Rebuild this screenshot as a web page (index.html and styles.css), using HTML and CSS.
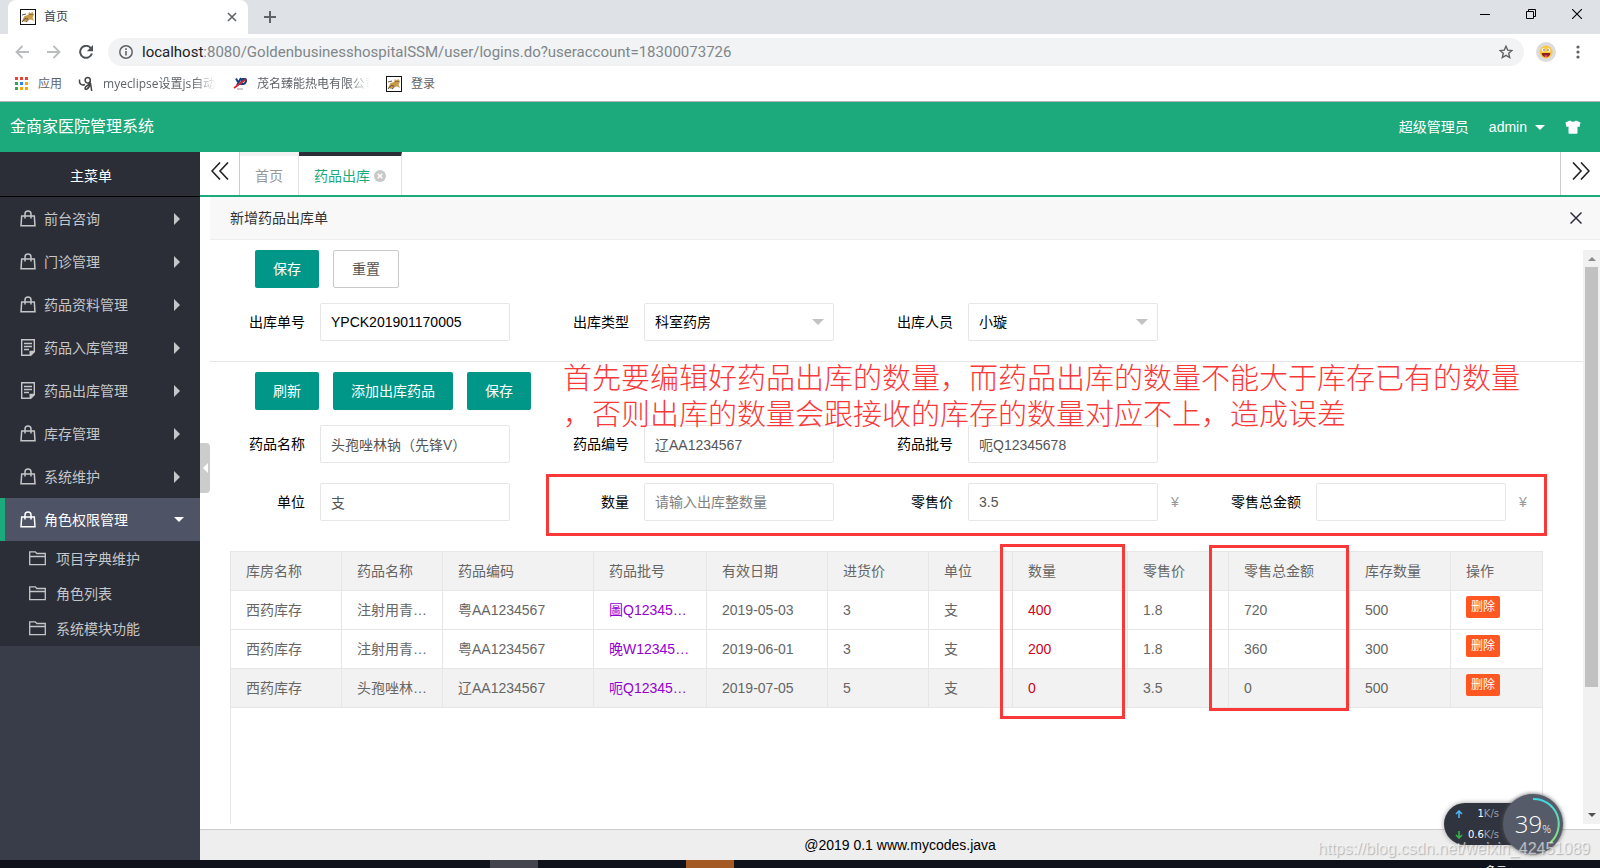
FILE: index.html
```html
<!DOCTYPE html>
<html lang="zh-CN">
<head>
<meta charset="utf-8">
<title>首页</title>
<link rel="stylesheet" href="styles.css">
</head>
<body>
<svg class="defs" width="0" height="0" aria-hidden="true">
  <symbol id="bag" viewBox="0 0 16 17"><path d="M1.700 6h12.600l.7 9.800H1zM5 8.500V4a3 3 0 0 1 6 0v4.500" fill="none" stroke="currentColor" stroke-width="1.500"/></symbol>
  <symbol id="note" viewBox="0 0 16 17"><path d="M9.800 16.200H1.700V.8h12.600v11.500M4 4.500h8M4 7.500h8M4 10.500h5" fill="none" stroke="currentColor" stroke-width="1.400"/><path d="M15 11.800v1.200l-4 4H9.500v-5.200z" fill="currentColor"/></symbol>
  <symbol id="folder" viewBox="0 0 17 15"><path d="M.7 13.600V.8h5.600l1.500 1.700h8.500v11.100zM.7 5.500h15.600" fill="none" stroke="currentColor" stroke-width="1.300"/></symbol>
  <symbol id="cat" viewBox="0 0 16 16"><rect x=".5" y=".5" width="15" height="15" fill="#fff" stroke="#111"/><path d="M2 12l2.500-5L8 6l1-3 1.500 1.300L12.500 3l1.500 2.500-1.500 3L14 12l-3-1.500L8 11l-2.500 2z" fill="#c99a49"/><path d="M2 6l4-1M2 13l3-3.500 3 .5M9.500 5l1 1M12 5v1M6 13l2.500-2" stroke="#555" fill="none"/></symbol>
</svg>

<header class="browser">
  <div class="tabstrip">
    <div class="tab">
      <svg width="16" height="16"><use href="#cat"/></svg>
      <span class="tab-title">首页</span>
      <button class="plain" aria-label="关闭标签页"><svg width="10" height="10" viewBox="0 0 10 10"><path d="M1 1l8 8M9 1L1 9" stroke="#5f6368" stroke-width="1.600"/></svg></button>
    </div>
    <button class="plain newtab" aria-label="新标签页"><svg width="12" height="12" viewBox="0 0 12 12"><path d="M6 0v12M0 6h12" stroke="#5f6368" stroke-width="2"/></svg></button>
    <div class="winctl">
      <button class="plain" aria-label="最小化"><svg width="10" height="10" viewBox="0 0 10 10"><path d="M0 5.500h10" stroke="#000"/></svg></button>
      <button class="plain" aria-label="还原"><svg width="10" height="10" viewBox="0 0 10 10"><path d="M.5 2.500h7v7h-7zM2.500 2.500v-2h7v7h-2" fill="none" stroke="#000"/></svg></button>
      <button class="plain" aria-label="关闭"><svg width="10" height="10" viewBox="0 0 10 10"><path d="M0 0l10 10M10 0L0 10" stroke="#000" stroke-width="1.100"/></svg></button>
    </div>
  </div>
  <div class="toolbar">
    <button class="plain" aria-label="后退"><svg width="14" height="14" viewBox="0 0 14 14"><path d="M14 7H1.500M7.500 1l-6 6 6 6" fill="none" stroke="#babcbe" stroke-width="1.800"/></svg></button>
    <button class="plain" aria-label="前进"><svg width="14" height="14" viewBox="0 0 14 14"><path d="M0 7h12.500M6.500 1l6 6-6 6" fill="none" stroke="#babcbe" stroke-width="1.800"/></svg></button>
    <button class="plain" aria-label="重新加载"><svg width="14" height="14" viewBox="0 0 14 14"><path d="M12 3.300A6 6 0 1 0 12.900 8.500" fill="none" stroke="#4e5257" stroke-width="2"/><path d="M14 0v6.200H7.800z" fill="#4e5257"/></svg></button>
    <div class="omnibox">
      <svg width="14" height="14" viewBox="0 0 14 14"><circle cx="7" cy="7" r="6.200" fill="none" stroke="#5f6368" stroke-width="1.500"/><path d="M7 6v4.500M7 3.300v1.700" stroke="#5f6368" stroke-width="1.600"/></svg>
      <span class="url"><b>localhost</b>:8080/GoldenbusinesshospitalSSM/user/logins.do?useraccount=18300073726</span>
      <svg width="14" height="14" viewBox="0 0 14 14"><path d="M7 1.200l1.700 3.900 4.200.4-3.200 2.800 1 4.200L7 10.300l-3.700 2.200 1-4.200L1.100 5.500l4.200-.4z" fill="none" stroke="#5f6368" stroke-width="1.400"/></svg>
    </div>
    <svg width="20" height="20" viewBox="0 0 20 20"><circle cx="10" cy="10" r="10" fill="#dadce0"/><circle cx="10" cy="10" r="6.500" fill="#fbc844"/><circle cx="7.500" cy="8" r="1.700" fill="#fff"/><circle cx="12.500" cy="8" r="1.700" fill="#fff"/><circle cx="8" cy="8" r=".7" fill="#222"/><circle cx="12" cy="8" r=".7" fill="#222"/><path d="M5.700 11h8.600a4.300 4.300 0 0 1-8.600 0z" fill="#8c1f1f"/><path d="M8 14a2.500 2 0 0 1 4 0l-2 1.200z" fill="#f0637a"/></svg>
    <button class="plain" aria-label="菜单"><svg width="4" height="14" viewBox="0 0 4 14"><g fill="#5f6368"><circle cx="2" cy="2" r="1.600"/><circle cx="2" cy="7" r="1.600"/><circle cx="2" cy="12" r="1.600"/></g></svg></button>
  </div>
  <nav class="bookmarks">
    <a href="#"><svg width="14" height="14" viewBox="0 0 14 14"><path d="M0 0h3v3H0zM5 0h3v3H5zM10 0h3v3h-3z" fill="#ea4335"/><path d="M0 5h3v3H0zM0 10h3v3H0z" fill="#34a853"/><path d="M5 5h3v3H5z" fill="#2d86f0"/><path d="M10 5h3v3h-3zM5 10h3v3H5zM10 10h3v3h-3z" fill="#f4a90a"/></svg><span>应用</span></a>
    <a href="#"><svg width="16" height="16" viewBox="0 0 16 16"><path d="M1.500 3.500c-.5 4 1.500 6.500 5.500 5M12.300 4.200a2.600 2.800 0 1 1-5.200 0 2.600 2.800 0 0 1 5.200 0c.3 3-1.300 4.500-3.600 5.800-2.400 1.400-2.200 4.200.3 3 1.800-1 3-3.500 3.500-6l1.200 8" fill="none" stroke="#444" stroke-width="1.500"/></svg><span class="fade">myeclipse设置js自动</span></a>
    <a href="#"><svg width="16" height="16" viewBox="0 0 16 16"><path d="M4 2.500l2 3.500M9 2L5 9.500M9 8l1.500-5H13c2 0 1 5-2 5z" fill="none" stroke="#17407e" stroke-width="2"/><path d="M2 12L13.500 3.500" stroke="#dc2430" stroke-width="1.700"/><path d="M5 13h6" stroke="#999"/></svg><span class="fade">茂名臻能热电有限公司</span></a>
    <a href="#"><svg width="16" height="16"><use href="#cat"/></svg><span>登录</span></a>
  </nav>
</header>

<div class="topbar">
  <h1>金商家医院管理系统</h1>
  <span>超级管理员</span>
  <button class="plain user">admin<i class="tri down"></i></button>
  <button class="plain" aria-label="换肤"><svg width="16" height="14" viewBox="0 0 16 14"><path d="M5 .5q3 2.500 6 0l4.500 2L14.500 7l-2-.5V13q0 .7-.7.7H4.200q-.7 0-.7-.7V6.500l-2 .5L.5 2.500z" fill="#fff"/></svg></button>
</div>

<div class="app">
  <aside class="side">
    <h2>主菜单</h2>
    <nav>
      <a class="item" href="#"><svg><use href="#bag"/></svg>前台咨询<i class="tri right"></i></a>
      <a class="item" href="#"><svg><use href="#bag"/></svg>门诊管理<i class="tri right"></i></a>
      <a class="item" href="#"><svg><use href="#bag"/></svg>药品资料管理<i class="tri right"></i></a>
      <a class="item" href="#"><svg><use href="#note"/></svg>药品入库管理<i class="tri right"></i></a>
      <a class="item" href="#"><svg><use href="#note"/></svg>药品出库管理<i class="tri right"></i></a>
      <a class="item" href="#"><svg><use href="#bag"/></svg>库存管理<i class="tri right"></i></a>
      <a class="item" href="#"><svg><use href="#bag"/></svg>系统维护<i class="tri right"></i></a>
      <a class="item active" href="#"><svg><use href="#bag"/></svg>角色权限管理<i class="tri down"></i></a>
      <a class="sub" href="#"><svg><use href="#folder"/></svg>项目字典维护</a>
      <a class="sub" href="#"><svg><use href="#folder"/></svg>角色列表</a>
      <a class="sub" href="#"><svg><use href="#folder"/></svg>系统模块功能</a>
    </nav>
  </aside>

  <main class="main">
    <button class="plain collapse" aria-label="收起菜单"><i class="tri left"></i></button>
    <div class="pagetabs">
      <button class="plain scroll" aria-label="向左"><svg width="18" height="18" viewBox="0 0 18 18"><path d="M9 .5L1 9l8 8.500M17 .5L9 9l8 8.500" fill="none" stroke="#222" stroke-width="1.600"/></svg></button>
      <button class="plain ptab">首页</button>
      <button class="plain ptab current">药品出库<svg width="12" height="12" viewBox="0 0 13 13"><circle cx="6.500" cy="6.500" r="6.500" fill="#c8c8c8"/><path d="M4 4l5 5M9 4L4 9" stroke="#fff" stroke-width="1.600"/></svg></button>
      <button class="plain scroll end" aria-label="向右"><svg width="18" height="18" viewBox="0 0 18 18"><path d="M1 .5L9 9l-8 8.500M9 .5L17 9l-8 8.500" fill="none" stroke="#222" stroke-width="1.600"/></svg></button>
    </div>

    <section class="panel">
      <header class="panel-head">
        <h3>新增药品出库单</h3>
        <button class="plain" aria-label="关闭"><svg width="12" height="12" viewBox="0 0 12 12"><path d="M.5.5l11 11M11.500.5l-11 11" stroke="#2e2d3c" stroke-width="1.500"/></svg></button>
      </header>
      <div class="frame">
        <div class="content">
          <form>
            <div class="buttons">
              <button type="button" class="btn">保存</button>
              <button type="reset" class="btn ghost">重置</button>
            </div>
            <div class="fields">
              <div class="field"><label for="no">出库单号</label><input id="no" class="strong" value="YPCK201901170005"></div>
              <div class="field"><label for="type">出库类型</label><div class="select"><select id="type"><option>科室药房</option></select></div></div>
              <div class="field"><label for="staff">出库人员</label><div class="select"><select id="staff"><option>小璇</option></select></div></div>
            </div>
          </form>
          <form class="detail">
            <div class="buttons">
              <button type="button" class="btn">刷新</button>
              <button type="button" class="btn">添加出库药品</button>
              <button type="button" class="btn">保存</button>
            </div>
            <div class="fields">
              <div class="field"><label for="name">药品名称</label><input id="name" value="头孢唑林钠（先锋V）"></div>
              <div class="field"><label for="code">药品编号</label><input id="code" value="辽AA1234567"></div>
              <div class="field"><label for="batch">药品批号</label><input id="batch" value="呃Q12345678"></div>
            </div>
            <div class="fields last">
              <div class="field"><label for="unit">单位</label><input id="unit" value="支"></div>
              <div class="field"><label for="qty">数量</label><input id="qty" placeholder="请输入出库整数量"></div>
              <div class="field"><label for="price">零售价</label><input id="price" value="3.5"><span class="yen">¥</span></div>
              <div class="field"><label for="total">零售总金额</label><input id="total"><span class="yen">¥</span></div>
              <div class="mark mark-form"></div>
            </div>
            <p class="remark">首先要编辑好药品出库的数量，而药品出库的数量不能大于库存已有的数量<br>，否则出库的数量会跟接收的库存的数量对应不上，造成误差</p>
          </form>
          <div class="grid">
            <table>
              <colgroup><col class="w111"><col class="w101"><col class="w151"><col class="w113"><col class="w121"><col class="w101"><col class="w84"><col class="w115"><col class="w101"><col class="w121"><col class="w101"><col class="w91"></colgroup>
              <thead><tr><th>库房名称</th><th>药品名称</th><th>药品编码</th><th>药品批号</th><th>有效日期</th><th>进货价</th><th>单位</th><th>数量</th><th>零售价</th><th>零售总金额</th><th>库存数量</th><th>操作</th></tr></thead>
              <tbody>
                <tr><td>西药库存</td><td>注射用青霉素钠</td><td>粤AA1234567</td><td class="violet">圖Q12345678</td><td>2019-05-03</td><td>3</td><td>支</td><td class="red">400</td><td>1.8</td><td>720</td><td>500</td><td><button class="del">删除</button></td></tr>
                <tr><td>西药库存</td><td>注射用青霉素钠</td><td>粤AA1234567</td><td class="violet">晚W12345678</td><td>2019-06-01</td><td>3</td><td>支</td><td class="red">200</td><td>1.8</td><td>360</td><td>300</td><td><button class="del">删除</button></td></tr>
                <tr class="hover"><td>西药库存</td><td>头孢唑林钠（先锋V）</td><td>辽AA1234567</td><td class="violet">呃Q12345678</td><td>2019-07-05</td><td>5</td><td>支</td><td class="red">0</td><td>3.5</td><td>0</td><td>500</td><td><button class="del">删除</button></td></tr>
              </tbody>
            </table>
            <div class="mark mark-qty"></div>
            <div class="mark mark-total"></div>
          </div>
        </div>
        <div class="scrollbar"><i class="tri up"></i><div class="thumb"></div><i class="tri down"></i></div>
      </div>
    </section>
    <footer>@2019 0.1 www.mycodes.java</footer>
  </main>
</div>

<div class="taskbar"><i class="task"></i><i class="task orange"></i><span class="clock">多云</span></div>

<div class="speed">
  <div class="rates">
    <div><svg width="8" height="8" viewBox="0 0 8 8"><path d="M4 8V1M1 4l3-3 3 3" fill="none" stroke="#4bb4f5" stroke-width="1.600"/></svg><b>1</b>K/s</div>
    <div><svg width="8" height="8" viewBox="0 0 8 8"><path d="M4 0v7M1 4l3 3 3-3" fill="none" stroke="#35b34a" stroke-width="1.600"/></svg><b>0.6</b>K/s</div>
  </div>
  <div class="dial">
    <svg width="60" height="60" viewBox="0 0 60 60"><defs><linearGradient id="arc" x2="0" y2="1"><stop stop-color="#3fd6e0"/><stop offset="1" stop-color="#8fe07a"/></linearGradient></defs><path d="M30 5a25 25 0 0 1 17 44" fill="none" stroke="url(#arc)" stroke-width="2"/></svg>
    <span>39<small>%</small></span>
  </div>
</div>
<div class="watermark">https://blog.csdn.net/weixin_42451089</div>
</body>
</html>
```
FILE: styles.css
```css
* { box-sizing: border-box; }
body {
  margin: 0;
  height: 100vh;
  display: flex;
  flex-direction: column;
  overflow: hidden;
  background: #fff;
  color: #000;
  font: 14px/20px "Liberation Sans", "Noto Sans CJK SC", sans-serif;
}
h1, h2, h3, p { margin: 0; font-weight: 400; }
a { color: inherit; text-decoration: none; }
button, input, select { font: inherit; color: inherit; }
button { cursor: pointer; }
svg { flex: none; display: block; }
.defs { position: absolute; }
.plain {
  display: flex;
  align-items: center;
  justify-content: center;
  padding: 0;
  border: 0;
  background: none;
}

/* triangles */
.tri { flex: none; width: 0; height: 0; border: 5px solid transparent; }
.tri.right { border-width: 6px 0 6px 6px; border-left-color: #c5c6c9; }
.tri.left { border-width: 5px 5px 5px 0; border-right-color: #fff; }
.tri.down { border-width: 5px 5px 0; border-top-color: #fff; }
.tri.up { border-width: 0 4px 4px; border-bottom-color: #8c8c8c; }

/* browser chrome */
.browser { flex: none; border-bottom: 1px solid #b6b4b6; font-family: "Open Sans", "Noto Sans CJK SC", sans-serif; }
.tabstrip { display: flex; height: 34px; padding-left: 8px; background: #dee1e6; }
.tab {
  display: flex;
  align-items: center;
  width: 240px;
  padding: 0 11px 0 12px;
  gap: 8px;
  border-radius: 8px 8px 0 0;
  background: #fff;
  color: #3c4043;
  font-size: 12px;
}
.tab-title { flex: 1; }
.newtab { width: 44px; }
.winctl { display: flex; align-items: center; gap: 36px; margin-left: auto; padding: 0 18px 6px 0; }
.toolbar { display: flex; align-items: center; gap: 18px; height: 36px; padding: 0 20px 0 15px; }
.omnibox {
  flex: 1;
  display: flex;
  align-items: center;
  gap: 9px;
  height: 28px;
  margin: 0 -6px 0 -3px;
  padding: 0 11px;
  border-radius: 14px;
  background: #f1f3f4;
}
.toolbar > svg { margin-right: 2px; }
.url { flex: 1; color: #80868b; font-family: Roboto, sans-serif; font-size: 15px; white-space: nowrap; }
.url b { color: #202124; font-weight: 400; }
.bookmarks { display: flex; align-items: center; gap: 16px; height: 31px; padding: 0 15px 3px; color: #5f6368; font-size: 12px; }
.bookmarks a { display: flex; align-items: center; gap: 9px; }
.fade {
  width: 113px;
  overflow: hidden;
  white-space: nowrap;
  mask-image: linear-gradient(to right, #000 80%, transparent);
}

/* application header */
.topbar {
  flex: none;
  display: flex;
  align-items: center;
  gap: 20px;
  height: 50px;
  padding: 0 19px 0 10px;
  background: #1ca97b;
  color: #fff;
}
.topbar h1 { flex: 1; font-size: 16px; }
.user { gap: 8px; }

.app { flex: 1; display: flex; min-height: 0; }

/* sidebar */
.side { flex: none; width: 200px; background: #393d49; color: #c5c6c9; }
.side h2 {
  height: 45px;
  padding-right: 18px;
  border-bottom: 1px solid #000;
  background: #2b2e37;
  color: #fff;
  font-size: 14px;
  line-height: 48px;
  text-align: center;
}
.side nav { background: #2b2e37; }
.item { display: flex; align-items: center; height: 43px; padding: 0 20px; }
.item svg { width: 16px; height: 17px; margin-right: 8px; }
.item .tri { margin-left: auto; }
.item.active { padding: 0 16px 0 15px; border-left: 5px solid #1ca97b; background: #4e5465; color: #fff; }
.sub { display: flex; align-items: center; height: 35px; padding-left: 29px; }
.sub svg { width: 17px; height: 15px; margin-right: 10px; }

/* main area */
.main { position: relative; flex: 1; display: flex; flex-direction: column; min-width: 0; }
.collapse {
  position: absolute;
  left: 0;
  top: 291px;
  width: 10px;
  height: 50px;
  border-radius: 0 4px 4px 0;
  background: #ccc;
}
.pagetabs { flex: none; display: flex; height: 45px; border-bottom: 2px solid #1ca97b; }
.scroll { width: 40px; padding-bottom: 5px; border-right: 1px solid #ccc; }
.scroll.end { margin-left: auto; border: 0; border-left: 1px solid #ccc; }
.ptab { gap: 4px; padding: 0 15px; border-top: 4px solid #f2f2f2; border-right: 1px solid #e2e2e2; color: #999; }
.ptab.current { border-top-color: #2b2e37; color: #1ca97b; }
.panel { flex: 1; display: flex; flex-direction: column; min-height: 0; margin-left: 10px; padding-bottom: 5px; }
.panel-head {
  flex: none;
  display: flex;
  align-items: center;
  justify-content: space-between;
  height: 43px;
  padding: 0 18px 0 20px;
  border-bottom: 1px solid #eee;
  background: #f8f8f8;
  color: #333;
}
.panel-head h3 { font-size: 14px; }
.frame { flex: 1; display: flex; min-height: 0; padding-top: 10px; }
.content { flex: 1; display: flex; flex-direction: column; min-width: 0; overflow: hidden; }
.scrollbar {
  flex: none;
  display: flex;
  flex-direction: column;
  align-items: center;
  width: 17px;
  padding: 7px 0;
  background: #f1f1f1;
}
.scrollbar .thumb { width: 13px; height: 75%; margin-top: 6px; background: #c1c1c1; }
.scrollbar .down { margin-top: auto; border-width: 4px 4px 0; border-top-color: #505050; }

/* form */
.buttons { display: flex; gap: 14px; padding-left: 45px; }
.btn {
  height: 38px;
  padding: 0 18px;
  border: 0;
  border-radius: 2px;
  background: #009688;
  color: #fff;
}
.btn.ghost { border: 1px solid #c9c9c9; background: #fff; color: #555; }
.fields { position: relative; display: flex; gap: 24px; padding: 15px 0 20px; }
.fields.last { padding: 0 0 30px; }
.detail { position: relative; padding-top: 10px; border-top: 1px solid #e6e6e6; }
.field { display: flex; align-items: center; }
.field label { width: 110px; padding-right: 15px; text-align: right; white-space: nowrap; }
.field input, .field select {
  width: 190px;
  height: 38px;
  padding: 0 10px;
  border: 1px solid #e6e6e6;
  border-radius: 2px;
  outline: 0;
  background: #fff;
  color: #555;
}
.field .strong, .field select { color: #000; }
.field ::placeholder { color: #808080; opacity: 1; }
.select { position: relative; }
.select select { display: block; appearance: none; }
.select::after {
  content: "";
  position: absolute;
  right: 10px;
  top: 16px;
  border: 6px solid transparent;
  border-width: 6px 6px 0;
  border-top-color: #c2c2c2;
  pointer-events: none;
}
.yen { width: 24px; padding-left: 13px; color: #999; }

/* annotations */
.mark { position: absolute; border: 3px solid #fb3838; pointer-events: none; }
.mark-form { left: 336px; top: -9px; width: 1001px; height: 62px; }
.mark-qty { left: 769px; top: -8px; width: 125px; height: 175px; }
.mark-total { left: 978px; top: -7px; width: 140px; height: 166px; }
.remark {
  position: absolute;
  left: 353px;
  top: -4px;
  color: #fb3838;
  font-family: "Noto Sans CJK SC", sans-serif;
  font-size: 29px;
  font-weight: 300;
  line-height: 36px;
  white-space: nowrap;
  pointer-events: none;
}

/* table */
.grid { position: relative; flex: 1; margin: 0 40px 0 20px; border: 1px solid #e6e6e6; border-bottom: 0; }
table { width: 100%; table-layout: fixed; border-collapse: separate; border-spacing: 0; color: #666; }
th, td {
  height: 39px;
  padding: 0 15px;
  overflow: hidden;
  border: solid #e6e6e6;
  border-width: 0 1px 1px 0;
  font-weight: 400;
  text-align: left;
  text-overflow: ellipsis;
  white-space: nowrap;
}
th:last-child, td:last-child { border-right: 0; }
th, .hover td { background: #f2f2f2; }
.violet { color: #9400d3; }
.red { color: #d0021b; }
.w84 { width: 84px; }
.w91 { width: 91px; }
.w101 { width: 101px; }
.w111 { width: 111px; }
.w113 { width: 113px; }
.w115 { width: 115px; }
.w121 { width: 121px; }
.w151 { width: 151px; }
.del {
  display: block;
  height: 22px;
  margin-bottom: 6px;
  padding: 0 5px;
  border: 0;
  border-radius: 2px;
  background: #ff5722;
  color: #fff;
  font-size: 12px;
  line-height: 22px;
}

footer {
  flex: none;
  height: 31px;
  border-top: 1px solid #ccc;
  background: #eee;
  line-height: 30px;
  text-align: center;
}

/* desktop */
.taskbar { flex: none; display: flex; height: 8px; padding: 0 93px 0 490px; overflow: hidden; background: #10121b; }
.task { width: 48px; height: 8px; background: #44444f; }
.task.orange { margin-left: 148px; background: #a45a24; }
.clock { margin-left: auto; padding-top: 4px; color: #fff; font-size: 11px; line-height: 14px; }

.speed { position: absolute; right: 37px; bottom: 14px; display: flex; align-items: center; }
.rates {
  width: 90px;
  height: 42px;
  margin-right: -31px;
  padding-left: 11px;
  border-radius: 21px 0 0 21px;
  background: #30343e;
  box-shadow: 0 0 5px #999;
  color: #9b9fa8;
  font: 10px/21px "DejaVu Sans", sans-serif;
}
.rates div { display: flex; align-items: center; width: 44px; }
.rates b { margin-left: auto; color: #fff; font-weight: 400; }
.dial {
  position: relative;
  width: 60px;
  height: 60px;
  border-radius: 50%;
  background: #565b69;
  box-shadow: 0 0 4px #555;
}
.dial span {
  position: absolute;
  left: 0;
  top: 0;
  width: 60px;
  color: #fff;
  font: 300 24px/60px "Open Sans", sans-serif;
  text-align: center;
}
.dial small { font-size: 11px; }
.watermark {
  position: absolute;
  right: 10px;
  bottom: 9px;
  color: rgba(255, 255, 255, 0.6);
  font-size: 16px;
  text-shadow: 1px 1px 1px rgba(120, 120, 120, 0.5);
}
```
